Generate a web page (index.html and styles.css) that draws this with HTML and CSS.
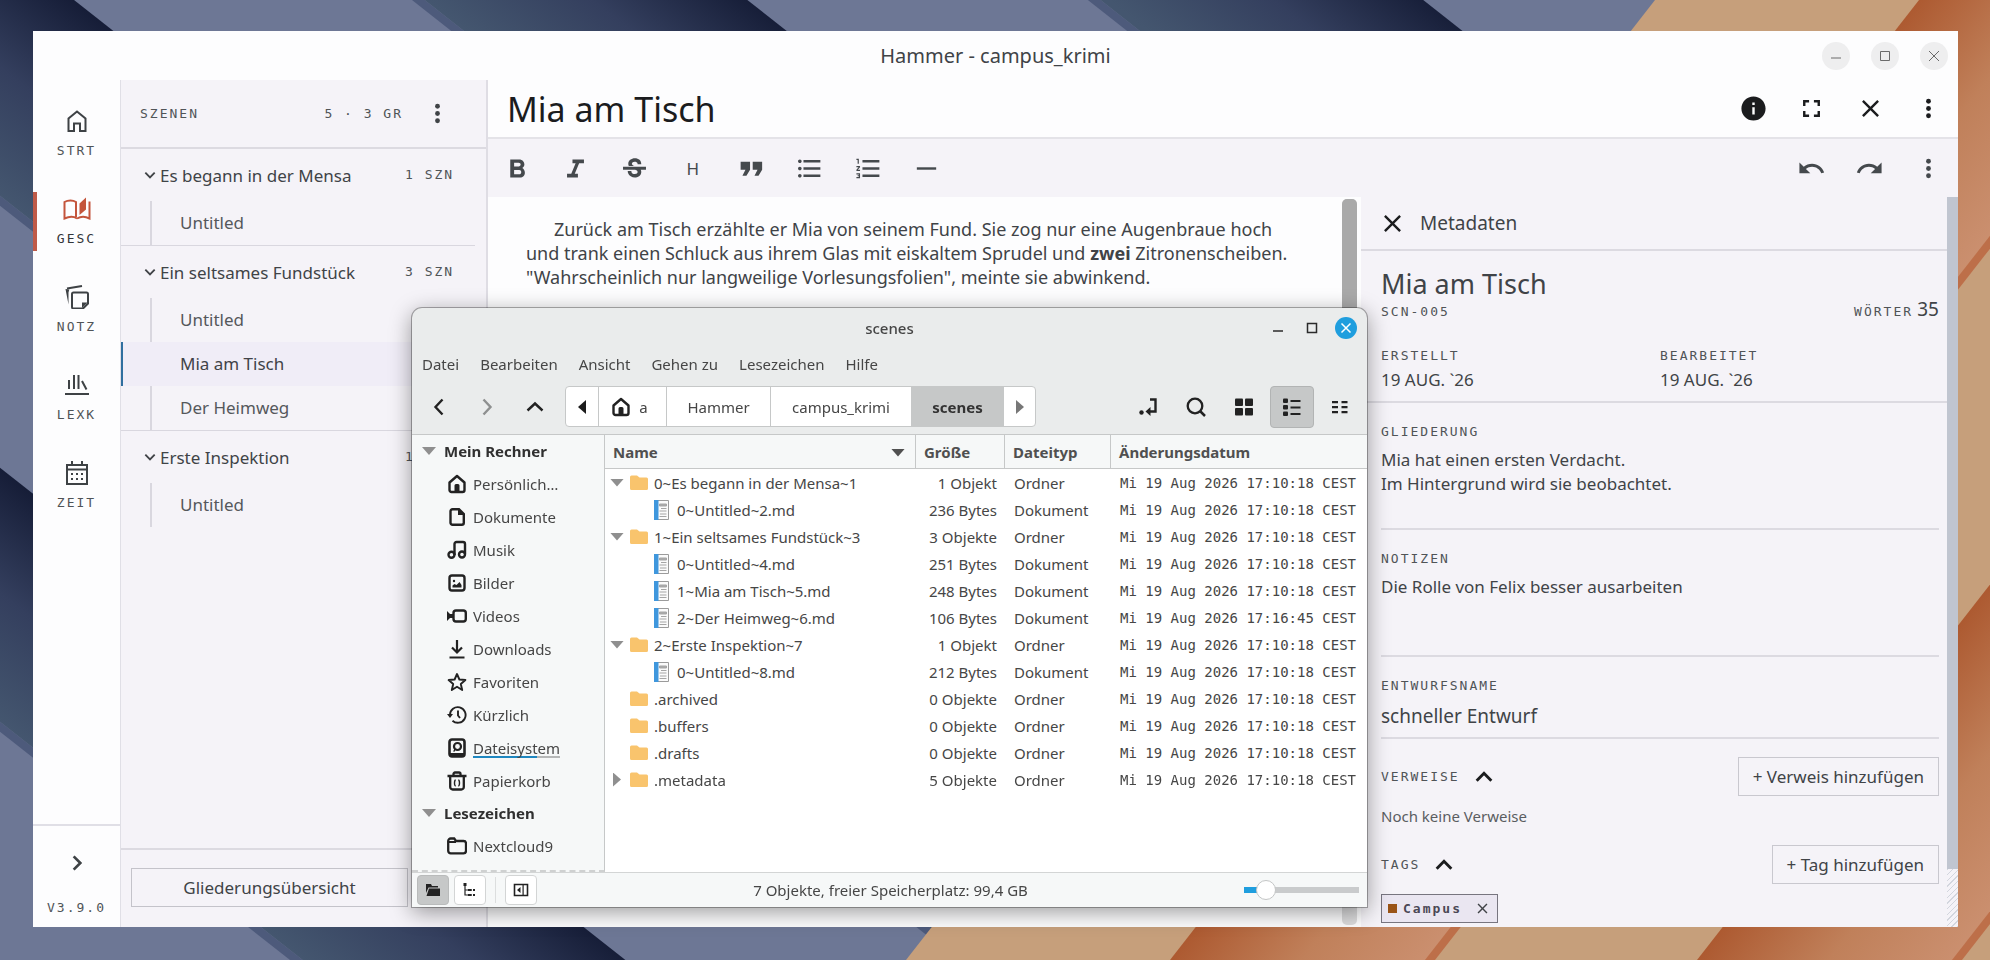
FILE: index.html
```html
<!DOCTYPE html>
<html lang="de">
<head>
    <meta charset="UTF-8">
    <meta name="viewport" content="width=device-width, initial-scale=1.0">
    <title>Hammer - campus_krimi</title>
    <link rel="stylesheet" href="styles.css">
</head>
<body>

<!-- icons -->
<svg class="sprite" aria-hidden="true">
    <symbol id="i-home" viewBox="0 0 24 24"><path d="M3.500 22V9.500L12 2.500l8.500 7V22H15v-7.500H9V22z" fill="none" stroke="currentColor" stroke-width="2"/></symbol>
    <symbol id="i-book" viewBox="0 0 28 24"><path d="M14 21.500C11 19.500 6 19.500 1.500 21.500V5C5 3 10 3 13 5v15M26.500 4.500v17c-4-2-9-2-12.500 0" fill="none" stroke="currentColor" stroke-width="2"/><path d="M16.500 6.500L23 .5v12l-6.500 5.500z" fill="currentColor"/></symbol>
    <symbol id="i-notes" viewBox="0 0 24 24"><path d="M8.500 7.500h13a1.500 1.500 0 0 1 1.500 1.500v9.500l-5 5H8.500A1.500 1.500 0 0 1 7 22V9a1.500 1.500 0 0 1 1.500-1.500zM2 3.500L17 1" fill="none" stroke="currentColor" stroke-width="2"/><path d="M17 23v-5.500h5.500zM.5 4l3 15.500v-12l.8-3z" fill="currentColor"/></symbol>
    <symbol id="i-lexicon" viewBox="0 0 24 24"><path d="M4 7v9M9 2v14M13.500 2v14M17 8l4.500 8.500M0 21h24" fill="none" stroke="currentColor" stroke-width="2"/></symbol>
    <symbol id="i-calendar" viewBox="0 0 24 24"><path d="M2 4h20v19H2zM2 8.500h20" fill="none" stroke="currentColor" stroke-width="2"/><path d="M6 0h2v4H6zM16 0h2v4h-2zM6 12h2v2H6zM11 12h2v2h-2zM16 12h2v2h-2zM6 17h2v2H6zM11 17h2v2h-2zM16 17h2v2h-2z" fill="currentColor"/></symbol>
    <symbol id="i-more" viewBox="0 0 24 24"><circle cx="12" cy="6" r="2"/><circle cx="12" cy="12" r="2"/><circle cx="12" cy="18" r="2"/></symbol>
    <symbol id="i-chevron" viewBox="0 0 12 12"><path d="M2 4l4 4 4-4" fill="none" stroke="currentColor" stroke-width="1.600"/></symbol>
    <symbol id="i-close" viewBox="0 0 24 24"><path d="M19 6.410L17.590 5 12 10.590 6.410 5 5 6.410 10.590 12 5 17.590 6.410 19 12 13.410 17.590 19 19 17.590 13.410 12z"/></symbol>
    <symbol id="i-info" viewBox="0 0 24 24"><path d="M12 2C6.480 2 2 6.480 2 12s4.480 10 10 10 10-4.480 10-10S17.520 2 12 2zm1 15h-2v-6h2v6zm0-8h-2V7h2v2z"/></symbol>
    <symbol id="i-full" viewBox="0 0 24 24"><path d="M7 14H5v5h5v-2H7v-3zm-2-4h2V7h3V5H5v5zm12 7h-3v2h5v-5h-2v3zM14 5v2h3v3h2V5h-5z"/></symbol>
    <symbol id="i-bold" viewBox="0 0 24 24"><path d="M16 11.600c1-.7 1.700-1.800 1.700-2.900 0-2.400-1.800-4.200-4.200-4.200H6v15h8.200c2.200 0 3.900-1.800 3.900-4 0-1.700-.9-3.200-2.100-3.900zM9.200 7.200h3.800c.9 0 1.600.7 1.600 1.500s-.7 1.600-1.600 1.600H9.200zm4.300 9.500H9.200v-3.400h4.300c.9 0 1.600.8 1.600 1.700s-.7 1.700-1.600 1.700z"/></symbol>
    <symbol id="i-italic" viewBox="0 0 24 24"><path d="M9.500 4.500v3.200h2.600L8.500 16.300H5v3.200h9v-3.200h-2.600L15 7.700h4V4.500z"/></symbol>
    <symbol id="i-strike" viewBox="0 1 24 24"><path d="M6.850 9.080C6.850 6.370 9.450 4.500 12.240 4.500c1.640 0 3 .49 3.900 1.280.77.65 1.460 1.730 1.460 3.740h-3.010c0-.31-.05-.59-.15-.85-.29-.86-1.200-1.280-2.250-1.280-1.860 0-2.340 1.020-2.340 1.700 0 .48.25.88.74 1.210.38.25.77.48 1.410.7H7.390c-.21-.34-.54-.89-.54-1.920zM21.500 14v-2.400h-19V14h10.120c1.150.45 1.960.75 1.960 1.970 0 1-.81 1.670-2.280 1.670-1.540 0-2.930-.54-2.930-2.510H6.400c0 .55.08 1.130.24 1.580.81 2.290 3.290 3.800 5.670 3.800 2.270 0 5.300-1.390 5.300-4.550 0-.3-.01-1.160-.48-1.940z"/></symbol>
    <symbol id="i-quote" viewBox="0 0 24 24"><path d="M4.500 18h3.300l3-5V6.500H3V13h4zm10 0h3.300l3-5V6.500H13V13h4z"/></symbol>
    <symbol id="i-list" viewBox="0 0 24 24"><path d="M4 10.500c-.83 0-1.500.67-1.500 1.500s.67 1.500 1.500 1.500 1.500-.67 1.500-1.500-.67-1.500-1.500-1.500zm0-6c-.83 0-1.500.67-1.500 1.500S3.170 7.500 4 7.500 5.500 6.830 5.500 6 4.830 4.500 4 4.500zm0 12c-.83 0-1.500.68-1.500 1.500s.68 1.500 1.500 1.500 1.500-.68 1.500-1.500-.67-1.500-1.500-1.500zM7 19h14v-2H7v2zm0-6h14v-2H7v2zm0-8v2h14V5H7z"/></symbol>
    <symbol id="i-numbers" viewBox="0 0 24 24"><path d="M2 17h2v.5H3v1h1v.5H2v1h3v-4H2v1zm1-9h1V4H2v1h1v3zm-1 3h1.800L2 13.100v.9h3v-1H3.200L5 10.900V10H2v1zm5-6v2h14V5H7zm0 14h14v-2H7v2zm0-6h14v-2H7v2z"/></symbol>
    <symbol id="i-rule" viewBox="0 0 24 24"><path d="M4 11h16v2H4z"/></symbol>
    <symbol id="i-undo" viewBox="0 0 24 24"><path d="M12.500 8c-2.650 0-5.050.99-6.900 2.600L2 7v9h9l-3.620-3.620c1.390-1.160 3.160-1.880 5.120-1.880 3.540 0 6.550 2.310 7.600 5.500l2.370-.78C21.080 11.030 17.150 8 12.500 8z"/></symbol>
    <symbol id="i-redo" viewBox="0 0 24 24"><path d="M18.400 10.600C16.550 8.990 14.150 8 11.500 8c-4.650 0-8.580 3.030-9.960 7.220L3.900 16c1.050-3.190 4.050-5.500 7.600-5.500 1.950 0 3.730.72 5.120 1.880L13 16h9V7l-3.600 3.600z"/></symbol>

    <symbol id="f-home" viewBox="0 0 20 20"><path d="M2.500 8.500L10 2l7.500 6.500V16a2 2 0 0 1-2 2h-11a2 2 0 0 1-2-2z" fill="none" stroke="currentColor" stroke-width="2.400" stroke-linejoin="round"/><path d="M7.500 11.500a1.500 1.500 0 0 1 1.500-1.500h2a1.500 1.500 0 0 1 1.500 1.500V18h-5z"/></symbol>
    <symbol id="f-doc" viewBox="0 0 20 20"><path d="M5.500 2.200h6.500l4.800 4.800v8.800a2 2 0 0 1-2 2h-9.300a2 2 0 0 1-2-2V4.200a2 2 0 0 1 2-2z" fill="none" stroke="currentColor" stroke-width="2.400"/><path d="M11 2v6h6z"/></symbol>
    <symbol id="f-music" viewBox="0 0 20 20"><path d="M7.500 15V4a2 2 0 0 1 2-2H16a2 2 0 0 1 2 2v10" fill="none" stroke="currentColor" stroke-width="2.400"/><circle cx="4.500" cy="14.800" r="3" fill="none" stroke="currentColor" stroke-width="2.400"/><circle cx="15" cy="14.500" r="3" fill="none" stroke="currentColor" stroke-width="2.400"/></symbol>
    <symbol id="f-image" viewBox="0 0 20 20"><rect x="2.500" y="2.500" width="15" height="15" rx="2.500" fill="none" stroke="currentColor" stroke-width="2.400"/><circle cx="7" cy="8" r="1.200"/><path d="M5.500 14.500v-2l2-1.500 2 1 3-3 2 3v2.500z"/></symbol>
    <symbol id="f-video" viewBox="0 0 20 20"><rect x="6.500" y="4.500" width="12.300" height="11" rx="2.500" fill="none" stroke="currentColor" stroke-width="2.400"/><path d="M0 5l5 5-5 5z"/><path d="M2 8h4v4H2z"/></symbol>
    <symbol id="f-download" viewBox="0 0 20 20"><path d="M10 1v12M5 8.500l5 5 5-5M2.500 18.500h15" fill="none" stroke="currentColor" stroke-width="2.200"/></symbol>
    <symbol id="f-star" viewBox="0 0 20 20"><path d="M10 2l2.400 5.500 6 .5-4.600 4 1.400 6L10 14.800 4.800 18l1.400-6L1.600 8l6-.5z" fill="none" stroke="currentColor" stroke-width="1.900" stroke-linejoin="round"/></symbol>
    <symbol id="f-recent" viewBox="0 0 20 20"><path d="M3 10a7.800 7.800 0 1 1 2.500 5.700M11 5.500v5l2 2.500" fill="none" stroke="currentColor" stroke-width="1.900"/><path d="M0 9h6l-3 4z"/></symbol>
    <symbol id="f-disk" viewBox="0 0 20 20"><rect x="2.500" y="1.500" width="15" height="17" rx="2.500" fill="none" stroke="currentColor" stroke-width="2.600"/><circle cx="10.500" cy="8.500" r="3.500" fill="none" stroke="currentColor" stroke-width="2.200"/><path d="M6 13.500l2-3.500v3.500zM3 15h14v3H3z"/></symbol>
    <symbol id="f-trash" viewBox="0 0 20 20"><path d="M.5 5h19M6.500 5V3a1.500 1.500 0 0 1 1.500-1.500h4A1.500 1.500 0 0 1 13.500 3v2M3.200 6v10a2.500 2.500 0 0 0 2.500 2.500h8.600a2.500 2.500 0 0 0 2.500-2.500V6" fill="none" stroke="currentColor" stroke-width="2.300"/><path d="M8.700 9c-1.200.2-1.200.8-1.200 3s0 2.800 1.200 3M11.300 9c1.200.2 1.200.8 1.200 3s0 2.800-1.200 3" fill="none" stroke="currentColor" stroke-width="1.400"/></symbol>
    <symbol id="f-folder" viewBox="0 0 20 20"><path d="M1.200 5a2.500 2.500 0 0 1 2.500-2.500h3.500L9 5h7.500a2.500 2.500 0 0 1 2.500 2.500v7.300a2.500 2.500 0 0 1-2.500 2.500H3.700a2.500 2.500 0 0 1-2.500-2.500z" fill="none" stroke="currentColor" stroke-width="2.300"/><path d="M2 6h7" stroke="currentColor" stroke-width="2"/></symbol>
    <symbol id="f-dir" viewBox="0 0 18 16"><path d="M0 2a1.500 1.500 0 0 1 1.500-1.500H7l2.500 2h7A1.500 1.500 0 0 1 18 4v9.500a1.500 1.500 0 0 1-1.500 1.500h-15A1.500 1.500 0 0 1 0 13.500z" fill="#f9c46d"/></symbol>
    <symbol id="f-file" viewBox="0 0 15 20"><path d="M.5.500h14v19H.5z" fill="#fbfbfb" stroke="#9b9b9b"/><path d="M0 0h4.500v20H0z" fill="#3f97dd"/><path d="M5.500 4h7v2h-7zM7 8.500h5.500M5.500 11h7M6 14h6.500M5.500 16.500h7" fill="#aaa" stroke="#a5a5a5" stroke-width="1"/></symbol>
    <symbol id="f-back" viewBox="0 0 20 20"><path d="M13.500 2.500L6.500 10l7 7.500" fill="none" stroke="currentColor" stroke-width="2.400"/></symbol>
    <symbol id="f-enter" viewBox="0 0 20 20"><path d="M12 2.500h5.500v12H9" fill="none" stroke="currentColor" stroke-width="2.400"/><path d="M7.500 14.500l5-4.500v9z"/><circle cx="3.500" cy="15.500" r="2.200"/></symbol>
    <symbol id="f-search" viewBox="0 0 20 20"><circle cx="9" cy="9" r="7.300" fill="none" stroke="currentColor" stroke-width="2.300"/><path d="M14 14l5 5" stroke="currentColor" stroke-width="2.500"/></symbol>
    <symbol id="f-grid" viewBox="0 0 20 20"><rect x="1" y="1.500" width="8" height="7.500" rx="1"/><rect x="11" y="1.500" width="8" height="7.500" rx="1"/><rect x="1" y="11" width="8" height="7.500" rx="1"/><rect x="11" y="11" width="8" height="7.500" rx="1"/></symbol>
    <symbol id="f-rows" viewBox="0 0 20 20"><rect x="1" y="1.500" width="5" height="4.500" rx="1"/><rect x="1" y="8" width="5" height="4.500" rx="1"/><rect x="1" y="14.500" width="5" height="4.500" rx="1"/><path d="M8.500 3h10v2h-10zM8.500 9.500h10v2h-10zM8.500 16h10v2h-10z"/></symbol>
    <symbol id="f-compact" viewBox="0 0 20 20"><path d="M2 4h6v2.200H2zM2 9h6v2.200H2zM2 14h6v2.200H2zM11.500 4h6v2.200h-6zM11.500 9h6v2.200h-6zM11.500 14h6v2.200h-6z"/></symbol>
</svg>

<svg class="wallpaper" viewBox="0 0 1990 960" preserveAspectRatio="none" aria-hidden="true">
    <defs>
        <linearGradient id="night" gradientUnits="userSpaceOnUse" x1="0" y1="722" x2="125" y2="562">
            <stop offset="0" stop-color="#44566f"/><stop offset=".5" stop-color="#343f5e"/><stop offset="1" stop-color="#151c36"/>
        </linearGradient>
        <linearGradient id="copper" gradientUnits="userSpaceOnUse" x1="1545" y1="480" x2="1708" y2="607">
            <stop offset="0" stop-color="#ad5a31"/><stop offset=".5" stop-color="#c0805a"/><stop offset="1" stop-color="#cb9070"/>
        </linearGradient>
        <g id="band">
            <path d="M-800 102L2000 2306V2296L-800 92z" fill="#4d5a7b"/>
            <path d="M-800 -162L2000 2042V2296L-800 92z" fill="url(#night)"/>
        </g>
        <g id="ribbon">
            <path d="M1919 0h262L1432 960h-262z" fill="url(#copper)"/>
            <path d="M2174 0h10L1435 960h-10z" fill="#bd6f49"/>
        </g>
    </defs>
    <rect width="1990" height="960" fill="#6d7795"/>
    <use href="#band"/>
    <use href="#band" transform="translate(0 -526)"/>
    <use href="#band" transform="translate(0 -1056)"/>
    <use href="#band" transform="translate(0 -1588)"/>
    <path d="M1655 0H1990V960H906z" fill="#c69f7b"/>
    <use href="#ribbon"/>
    <use href="#ribbon" transform="translate(527 0)"/>
</svg>

<div class="app">
    <header class="app-title">
        <h1>Hammer - campus_krimi</h1>
        <div class="app-buttons">
            <button aria-label="Minimieren"><svg viewBox="0 0 12 12"><path d="M1 8h10"/></svg></button>
            <button aria-label="Maximieren"><svg viewBox="0 0 12 12"><path d="M1.500 1.500h9v9h-9z"/></svg></button>
            <button aria-label="Schließen"><svg viewBox="0 0 12 12"><path d="M1 1l10 10M11 1L1 11"/></svg></button>
        </div>
    </header>

    <div class="app-body">
        <nav class="rail">
            <a href="#"><svg><use href="#i-home"/></svg><span>STRT</span></a>
            <a href="#" class="active"><svg><use href="#i-book"/></svg><span>GESC</span></a>
            <a href="#"><svg><use href="#i-notes"/></svg><span>NOTZ</span></a>
            <a href="#"><svg><use href="#i-lexicon"/></svg><span>LEXK</span></a>
            <a href="#"><svg><use href="#i-calendar"/></svg><span>ZEIT</span></a>
            <div class="rail-foot">
                <button aria-label="Ausklappen"><svg><use href="#i-chevron"/></svg></button>
                <span>V3.9.0</span>
            </div>
        </nav>

        <aside class="scenes">
            <div class="scenes-head">
                <span>SZENEN</span>
                <span class="count">5 · 3 GR</span>
                <button aria-label="Mehr"><svg class="icon"><use href="#i-more"/></svg></button>
            </div>
            <section class="group">
                <div class="group-head"><svg><use href="#i-chevron"/></svg><span>Es begann in der Mensa</span><small>1 SZN</small></div>
                <ul><li><a href="#">Untitled</a></li></ul>
            </section>
            <section class="group">
                <div class="group-head"><svg><use href="#i-chevron"/></svg><span>Ein seltsames Fundstück</span><small>3 SZN</small></div>
                <ul>
                    <li><a href="#">Untitled</a></li>
                    <li class="selected"><a href="#">Mia am Tisch</a></li>
                    <li><a href="#">Der Heimweg</a></li>
                </ul>
            </section>
            <section class="group">
                <div class="group-head"><svg><use href="#i-chevron"/></svg><span>Erste Inspektion</span><small>1</small></div>
                <ul><li><a href="#">Untitled</a></li></ul>
            </section>
            <div class="scenes-foot"><button>Gliederungsübersicht</button></div>
        </aside>

        <main class="editor">
            <div class="editor-head">
                <h2>Mia am Tisch</h2>
                <div class="actions">
                    <button aria-label="Info"><svg class="icon"><use href="#i-info"/></svg></button>
                    <button aria-label="Vollbild"><svg class="icon"><use href="#i-full"/></svg></button>
                    <button aria-label="Schließen"><svg class="icon"><use href="#i-close"/></svg></button>
                    <button aria-label="Mehr"><svg class="icon"><use href="#i-more"/></svg></button>
                </div>
            </div>
            <div class="toolbar">
                <div class="format">
                    <button aria-label="Fett"><svg class="icon"><use href="#i-bold"/></svg></button>
                    <button aria-label="Kursiv"><svg class="icon"><use href="#i-italic"/></svg></button>
                    <button aria-label="Durchgestrichen"><svg class="icon"><use href="#i-strike"/></svg></button>
                    <button>H</button>
                    <button aria-label="Zitat"><svg class="icon"><use href="#i-quote"/></svg></button>
                    <button aria-label="Liste"><svg class="icon"><use href="#i-list"/></svg></button>
                    <button aria-label="Nummerierung"><svg class="icon"><use href="#i-numbers"/></svg></button>
                    <button aria-label="Trennlinie"><svg class="icon"><use href="#i-rule"/></svg></button>
                </div>
                <div class="actions three">
                    <button aria-label="Rückgängig"><svg class="icon"><use href="#i-undo"/></svg></button>
                    <button aria-label="Wiederholen"><svg class="icon"><use href="#i-redo"/></svg></button>
                    <button aria-label="Mehr"><svg class="icon"><use href="#i-more"/></svg></button>
                </div>
            </div>
            <div class="editor-body">
                <div class="page">
                    <p>Zurück am Tisch erzählte er Mia von seinem Fund. Sie zog nur eine Augenbraue hoch<br>
                    und trank einen Schluck aus ihrem Glas mit eiskaltem Sprudel und <b>zwei</b> Zitronenscheiben.<br>
                    "Wahrscheinlich nur langweilige Vorlesungsfolien", meinte sie abwinkend.</p>
                </div>
                <div class="page-scroll"><div></div></div>
                <aside class="meta">
                    <div class="meta-main">
                        <div class="meta-head">
                            <button aria-label="Schließen"><svg class="icon"><use href="#i-close"/></svg></button>
                            <span>Metadaten</span>
                        </div>
                        <div class="meta-top">
                            <div class="meta-name">
                                <h3>Mia am Tisch</h3>
                                <div class="words"><span class="label">SCN-005</span><span class="total"><span class="label">WÖRTER</span> <b>35</b></span></div>
                            </div>
                            <div class="dates">
                                <div><span class="label">ERSTELLT</span><p>19 AUG. `26</p></div>
                                <div><span class="label">BEARBEITET</span><p>19 AUG. `26</p></div>
                            </div>
                        </div>
                        <div class="field">
                            <label class="label" for="outline">GLIEDERUNG</label>
                            <textarea id="outline">Mia hat einen ersten Verdacht.
Im Hintergrund wird sie beobachtet.</textarea>
                        </div>
                        <div class="field">
                            <label class="label" for="notes">NOTIZEN</label>
                            <textarea id="notes">Die Rolle von Felix besser ausarbeiten</textarea>
                        </div>
                        <div class="field last">
                            <label class="label" for="draft">ENTWURFSNAME</label>
                            <input id="draft" type="text" value="schneller Entwurf">
                        </div>
                        <div class="meta-row">
                            <span class="label">VERWEISE</span><svg class="up"><use href="#i-chevron"/></svg>
                            <button>+ Verweis hinzufügen</button>
                        </div>
                        <p class="empty">Noch keine Verweise</p>
                        <div class="meta-row">
                            <span class="label">TAGS</span><svg class="up"><use href="#i-chevron"/></svg>
                            <button>+ Tag hinzufügen</button>
                        </div>
                        <div class="tag"><i></i><span>Campus</span><button aria-label="Entfernen"><svg><use href="#i-close"/></svg></button></div>
                    </div>
                    <div class="meta-scroll"><div></div></div>
                </aside>
            </div>
        </main>
    </div>
</div>

<!-- file manager window -->
<div class="files">
    <header class="files-title">
        <span>scenes</span>
        <div class="files-buttons">
            <button aria-label="Minimieren"><svg viewBox="0 0 12 12"><path d="M1 9h10"/></svg></button>
            <button aria-label="Maximieren"><svg viewBox="0 0 12 12"><path d="M1.500 1.500h9v9h-9z"/></svg></button>
            <button class="x" aria-label="Schließen"><svg viewBox="0 0 12 12"><path d="M1.500 1.500l9 9M10.500 1.500l-9 9"/></svg></button>
        </div>
    </header>
    <nav class="menu">
        <a href="#">Datei</a><a href="#">Bearbeiten</a><a href="#">Ansicht</a><a href="#">Gehen zu</a><a href="#">Lesezeichen</a><a href="#">Hilfe</a>
    </nav>
    <div class="files-bar">
        <div class="history">
            <button aria-label="Zurück"><svg><use href="#f-back"/></svg></button>
            <button class="fwd" aria-label="Vor" disabled><svg><use href="#f-back"/></svg></button>
            <button class="parent" aria-label="Hoch"><svg><use href="#f-back"/></svg></button>
        </div>
        <div class="path">
            <button class="arrow" aria-label="Links"><svg viewBox="0 0 8 14"><path d="M8 0v14L0 7z"/></svg></button>
            <button class="home"><svg><use href="#f-home"/></svg>a</button>
            <button class="p1">Hammer</button>
            <button class="p2">campus_krimi</button>
            <button class="p3 current">scenes</button>
            <button class="arrow right" aria-label="Rechts"><svg viewBox="0 0 8 14"><path d="M0 0v14l8-7z"/></svg></button>
        </div>
        <div class="views">
            <button aria-label="Pfad eingeben"><svg><use href="#f-enter"/></svg></button>
            <button aria-label="Suchen"><svg><use href="#f-search"/></svg></button>
            <button aria-label="Symbole"><svg><use href="#f-grid"/></svg></button>
            <button class="on" aria-label="Liste"><svg><use href="#f-rows"/></svg></button>
            <button aria-label="Kompakt"><svg><use href="#f-compact"/></svg></button>
        </div>
    </div>
    <div class="files-body">
        <aside class="places">
            <h4><i class="tri"></i>Mein Rechner</h4>
            <a href="#"><svg><use href="#f-home"/></svg>Persönlich…</a>
            <a href="#"><svg><use href="#f-doc"/></svg>Dokumente</a>
            <a href="#"><svg><use href="#f-music"/></svg>Musik</a>
            <a href="#"><svg><use href="#f-image"/></svg>Bilder</a>
            <a href="#"><svg><use href="#f-video"/></svg>Videos</a>
            <a href="#"><svg><use href="#f-download"/></svg>Downloads</a>
            <a href="#"><svg><use href="#f-star"/></svg>Favoriten</a>
            <a href="#"><svg><use href="#f-recent"/></svg>Kürzlich</a>
            <a href="#"><svg><use href="#f-disk"/></svg><span class="usage">Dateisystem</span></a>
            <a href="#"><svg><use href="#f-trash"/></svg>Papierkorb</a>
            <h4><i class="tri"></i>Lesezeichen</h4>
            <a href="#"><svg><use href="#f-folder"/></svg>Nextcloud9</a>
            <a href="#" aria-label="Ordner"><svg><use href="#f-folder"/></svg></a>
        </aside>
        <div class="listing">
            <table>
                <thead>
                    <tr><th class="c-name">Name<i class="tri"></i></th><th class="c-size">Größe</th><th class="c-type">Dateityp</th><th>Änderungsdatum</th></tr>
                </thead>
                <tbody>
                    <tr><td><div class="name"><i class="tri"></i><svg><use href="#f-dir"/></svg>0~Es begann in der Mensa~1</div></td><td>1 Objekt</td><td>Ordner</td><td>Mi 19 Aug 2026 17:10:18 CEST</td></tr>
                    <tr><td><div class="name file"><svg><use href="#f-file"/></svg>0~Untitled~2.md</div></td><td>236 Bytes</td><td>Dokument</td><td>Mi 19 Aug 2026 17:10:18 CEST</td></tr>
                    <tr><td><div class="name"><i class="tri"></i><svg><use href="#f-dir"/></svg>1~Ein seltsames Fundstück~3</div></td><td>3 Objekte</td><td>Ordner</td><td>Mi 19 Aug 2026 17:10:18 CEST</td></tr>
                    <tr><td><div class="name file"><svg><use href="#f-file"/></svg>0~Untitled~4.md</div></td><td>251 Bytes</td><td>Dokument</td><td>Mi 19 Aug 2026 17:10:18 CEST</td></tr>
                    <tr><td><div class="name file"><svg><use href="#f-file"/></svg>1~Mia am Tisch~5.md</div></td><td>248 Bytes</td><td>Dokument</td><td>Mi 19 Aug 2026 17:10:18 CEST</td></tr>
                    <tr><td><div class="name file"><svg><use href="#f-file"/></svg>2~Der Heimweg~6.md</div></td><td>106 Bytes</td><td>Dokument</td><td>Mi 19 Aug 2026 17:16:45 CEST</td></tr>
                    <tr><td><div class="name"><i class="tri"></i><svg><use href="#f-dir"/></svg>2~Erste Inspektion~7</div></td><td>1 Objekt</td><td>Ordner</td><td>Mi 19 Aug 2026 17:10:18 CEST</td></tr>
                    <tr><td><div class="name file"><svg><use href="#f-file"/></svg>0~Untitled~8.md</div></td><td>212 Bytes</td><td>Dokument</td><td>Mi 19 Aug 2026 17:10:18 CEST</td></tr>
                    <tr><td><div class="name"><i class="tri none"></i><svg><use href="#f-dir"/></svg>.archived</div></td><td>0 Objekte</td><td>Ordner</td><td>Mi 19 Aug 2026 17:10:18 CEST</td></tr>
                    <tr><td><div class="name"><i class="tri none"></i><svg><use href="#f-dir"/></svg>.buffers</div></td><td>0 Objekte</td><td>Ordner</td><td>Mi 19 Aug 2026 17:10:18 CEST</td></tr>
                    <tr><td><div class="name"><i class="tri none"></i><svg><use href="#f-dir"/></svg>.drafts</div></td><td>0 Objekte</td><td>Ordner</td><td>Mi 19 Aug 2026 17:10:18 CEST</td></tr>
                    <tr><td><div class="name"><i class="tri closed"></i><svg><use href="#f-dir"/></svg>.metadata</div></td><td>5 Objekte</td><td>Ordner</td><td>Mi 19 Aug 2026 17:10:18 CEST</td></tr>
                </tbody>
            </table>
        </div>
    </div>
    <footer class="status">
        <button class="on" aria-label="Orte"><svg viewBox="0 0 16 14"><path d="M1 1h5l1 2h6v1.500H3.500L1 10zM4 5.500h11V13H1.500z"/></svg></button>
        <button aria-label="Baum"><svg viewBox="0 0 16 14"><path d="M3 2v10h3M3 7h3M8 7h2M8 12h2" fill="none" stroke="currentColor" stroke-width="1.200"/><path d="M1.500 0h3v3h-3zM6 6h3.500v2H6zM6 11h3.500v2H6zM11 6h2v2h-2zM11 11h2v2h-2z"/></svg></button>
        <span class="sep"></span>
        <button aria-label="Seitenleiste"><svg viewBox="0 0 16 14"><path d="M1.500 1.500h13v11h-13z" fill="none" stroke="currentColor" stroke-width="1.600"/><path d="M7.500 4v6L4 7zM9.500 2h1.200v10H9.500z"/></svg></button>
        <span class="status-text">7 Objekte, freier Speicherplatz: 99,4 GB</span>
        <input type="range" min="0" max="100" value="13" aria-label="Zoom">
    </footer>
</div>

</body>
</html>
```
FILE: styles.css
```css
* {
    box-sizing: border-box;
}

body {
    margin: 0;
    height: 100vh;
    overflow: hidden;
    padding: 31px 32px 33px 33px;
    font-family: "Noto Sans", sans-serif;
    color: #404347;
}

h1, h2, h3, h4, p, ul {
    margin: 0;
    padding: 0;
    font-weight: normal;
    list-style: none;
}

a {
    color: inherit;
    text-decoration: none;
}

button {
    border: 0;
    padding: 0;
    background: none;
    color: inherit;
    font: inherit;
    cursor: pointer;
    display: flex;
    align-items: center;
    justify-content: center;
}

svg {
    fill: currentColor;
    flex: none;
}

.sprite {
    position: absolute;
    width: 0;
    height: 0;
}

.wallpaper {
    position: fixed;
    top: 0;
    left: 0;
    width: 100%;
    height: 100%;
    z-index: -1;
}

.icon {
    width: 29px;
    height: 29px;
}

/* main window */
.app {
    height: 100%;
    display: flex;
    flex-direction: column;
    background: #fdfdfe;
}

.app-title {
    height: 49px;
    display: grid;
    grid-template-columns: 1fr auto 1fr;
    align-items: center;
    flex: none;
}

.app-title h1 {
    grid-column: 2;
    font-size: 20px;
}

.app-buttons {
    display: flex;
    gap: 21px;
    justify-content: flex-end;
    padding-right: 10px;
}

.app-buttons button {
    width: 28px;
    height: 28px;
    border-radius: 50%;
    background: #eeeeef;
}

.app-buttons svg {
    width: 12px;
    height: 12px;
    fill: none;
    stroke: #6b6b6b;
}

.app-body {
    flex: 1;
    min-height: 0;
    display: flex;
}

.rail {
    width: 88px;
    border-right: 1px solid #e0dfe6;
    padding-top: 24px;
    display: flex;
    flex-direction: column;
    gap: 29px;
    flex: none;
    color: #3e4245;
}

.rail a {
    height: 59px;
    display: flex;
    flex-direction: column;
    align-items: center;
    justify-content: space-between;
    border-left: 4px solid transparent;
    padding: 5px 4px 3px 0;
}

.rail svg {
    width: 28px;
    height: 24px;
}

.rail .active {
    border-left-color: #bf5a48;
}

.rail .active svg {
    color: #c4553c;
}

.rail span, .label, .scenes-head span, .group-head small {
    font-family: "DejaVu Sans Mono", monospace;
    font-size: 13px;
    line-height: 18px;
    letter-spacing: 2px;
    color: #505457;
}

.rail .active span {
    color: #33363a;
}

.rail-foot {
    margin-top: auto;
    height: 103px;
    border-top: 2px solid #e0dfe6;
    display: flex;
    flex-direction: column;
    align-items: center;
    justify-content: space-between;
    padding: 27px 0 10px;
}

.rail-foot svg {
    width: 20px;
    height: 20px;
    transform: rotate(-90deg);
}

/* scene list */
.scenes {
    width: 367px;
    flex: none;
    background: #f5f3f8;
    border-right: 2px solid #dfdde4;
    display: flex;
    flex-direction: column;
}

.scenes-head {
    height: 69px;
    display: flex;
    align-items: center;
    padding: 0 34px 0 19px;
    border-bottom: 2px solid #dcdae1;
}

.scenes-head .count {
    margin-left: auto;
    margin-right: 20px;
}

.group {
    margin-right: 11px;
    border-bottom: 1px solid #d9d7df;
}

.group:nth-of-type(3) {
    border-bottom: 0;
}

.group-head {
    height: 52px;
    display: flex;
    align-items: center;
    padding: 0 21px 0 22px;
    font-size: 17px;
}

.group-head svg {
    width: 14px;
    height: 14px;
    margin-right: 3px;
}

.group-head small {
    margin-left: auto;
    width: 49px;
    white-space: nowrap;
}

.group ul {
    background: linear-gradient(#d9d7df, #d9d7df) 29px 0 / 2px 100% no-repeat;
}

.group li a {
    display: block;
    height: 44px;
    line-height: 44px;
    padding-left: 57px;
    font-size: 17px;
    color: #55585c;
    border-left: 2px solid transparent;
}

.group .selected a {
    background: #f0edf7;
    border-left-color: #2f6f9f;
    background-clip: padding-box;
    color: #404347;
}

.scenes-foot {
    margin-top: auto;
    height: 79px;
    border-top: 2px solid #dcdae1;
    padding: 18px 78px 19px 10px;
}

.scenes-foot button {
    width: 100%;
    height: 39px;
    border: 1px solid #c4c3ca;
    font-size: 17px;
}

/* editor */
.editor {
    flex: 1;
    min-width: 0;
    display: flex;
    flex-direction: column;
}

.editor-head {
    height: 59px;
    display: flex;
    align-items: center;
    justify-content: space-between;
    padding-left: 19px;
    border-bottom: 2px solid #e4e3e8;
    color: #1b1c1e;
    flex: none;
}

.editor-head h2 {
    font-size: 34px;
}

.actions {
    width: 234px;
    display: grid;
    grid-template-columns: repeat(4, 1fr);
}

.actions.three {
    width: 176px;
    grid-template-columns: repeat(3, 1fr);
}

.toolbar {
    height: 58px;
    display: flex;
    align-items: center;
    justify-content: space-between;
    background: #f5f3f8;
    color: #45494d;
    flex: none;
}

.format {
    width: 468px;
    display: grid;
    grid-template-columns: repeat(8, 1fr);
    font-size: 17px;
}

.editor-body {
    flex: 1;
    min-height: 0;
    display: flex;
}

.page {
    flex: 1;
    padding: 20px 0 0 38px;
    font-size: 18px;
    line-height: 24px;
    white-space: nowrap;
}

.page p {
    text-indent: 28px;
}

.page-scroll {
    width: 15px;
    margin: 2px 4px 2px 0;
    border-radius: 5px;
    background: #dcdcdd;
}

.page-scroll div {
    height: 80%;
    border-radius: 5px;
    background: #a9a9a9;
}

/* metadata panel */
.meta {
    width: 597px;
    flex: none;
    display: flex;
    background: #f5f3f8;
    overflow: hidden;
}

.meta-main {
    flex: 1;
    min-width: 0;
}

.meta-head {
    height: 54px;
    display: flex;
    align-items: center;
    gap: 13px;
    padding-left: 17px;
    font-size: 19px;
    border-bottom: 2px solid #dcdae1;
}

.meta-head svg {
    color: #1b1c1e;
}

.meta-top {
    padding: 14px 8px 9px 20px;
    border-bottom: 2px solid #dcdae1;
    height: 152px;
}

.meta h3 {
    font-size: 27px;
    line-height: 38px;
}

.words {
    display: flex;
    justify-content: space-between;
    align-items: flex-start;
    height: 18px;
}

.words .total {
    line-height: 12px;
}

.words .total .label {
    line-height: 12px;
}

.words b {
    font-size: 19px;
    font-weight: normal;
}

.dates {
    display: grid;
    grid-template-columns: 1fr 1fr;
    margin-top: 26px;
    font-size: 17px;
    line-height: 24px;
}

.label {
    display: inline-block;
}

.dates .label {
    display: block;
    margin-bottom: 3px;
}

.field {
    margin: 0 8px 0 20px;
    height: 127px;
    padding-top: 20px;
    border-bottom: 2px solid #dcdae1;
}

.field .label {
    display: block;
    margin-bottom: 7px;
}

.field textarea, .field input {
    display: block;
    width: 100%;
    border: 0;
    padding: 0;
    background: none;
    font: 17px/24px "Noto Sans", sans-serif;
    color: inherit;
    resize: none;
    outline: 0;
}

.field textarea {
    height: 60px;
}

.field.last {
    height: 82px;
}

.field.last input {
    font-size: 19px;
    height: 28px;
}

.meta-row {
    display: flex;
    align-items: center;
    margin: 18px 8px 0 20px;
}

.meta-row .up {
    width: 22px;
    height: 22px;
    margin-left: 13px;
    color: #1b1c1e;
    transform: rotate(180deg);
}

.meta-row button {
    margin-left: auto;
    height: 39px;
    padding: 0 14px;
    border: 1px solid #c9c8cf;
    font-size: 17px;
}

.empty {
    margin: 9px 0 0 20px;
    font-size: 15px;
    line-height: 22px;
    color: #5a5d61;
}

.tag {
    display: flex;
    align-items: center;
    width: 117px;
    height: 29px;
    margin: 10px 0 0 20px;
    padding: 0 6px;
    border: 1px solid #77757f;
    background: #eae6f1;
}

.tag i {
    width: 9px;
    height: 9px;
    background: #9a5417;
    margin-right: 6px;
}

.tag span {
    font: bold 13px "DejaVu Sans Mono", monospace;
    letter-spacing: 2px;
    color: #4b4855;
}

.tag button {
    margin-left: auto;
}

.tag svg {
    width: 17px;
    height: 17px;
}

.meta-scroll {
    width: 11px;
    background: repeating-linear-gradient(135deg, #f5f3f8 0 3px, #d3d6de 3px 4px);
}

.meta-scroll div {
    height: 92%;
    background: #c0c5d0;
}

/* file manager */
.files {
    position: absolute;
    left: 412px;
    top: 308px;
    width: 955px;
    height: 599px;
    display: flex;
    flex-direction: column;
    background: #eaecec;
    border-radius: 10px 10px 0 0;
    box-shadow: 0 0 0 1px rgba(0, 0, 0, 0.3), 0 5px 22px rgba(0, 0, 0, 0.4);
    font-size: 15px;
    color: #464646;
}

.files-title {
    height: 39px;
    display: grid;
    grid-template-columns: 1fr auto 1fr;
    align-items: center;
}

.files-title > span {
    grid-column: 2;
    font-weight: 500;
}

.files-buttons {
    display: flex;
    justify-content: flex-end;
    gap: 12px;
    padding-right: 10px;
}

.files-buttons button {
    width: 22px;
    height: 22px;
    border-radius: 50%;
}

.files-buttons svg {
    width: 12px;
    height: 12px;
    fill: none;
    stroke: #2b2b2b;
    stroke-width: 1.5;
}

.files-buttons .x {
    background: #1f9ede;
}

.files-buttons .x svg {
    stroke: #fff;
}

.menu {
    height: 34px;
    display: flex;
    align-items: center;
    gap: 21px;
    padding-left: 10px;
}

.files-bar {
    height: 54px;
    display: flex;
    align-items: center;
    border-bottom: 1px solid #c6c8c8;
    padding: 0 5px 2px;
    color: #222;
    flex: none;
}

.files-bar svg {
    width: 20px;
    height: 20px;
}

.history, .views {
    display: flex;
}

.history button, .views button {
    width: 44px;
    height: 42px;
    margin-right: 4px;
    border-radius: 4px;
}

.fwd svg {
    transform: rotate(180deg);
    color: #8e9090;
}

.parent svg {
    transform: rotate(90deg);
}

.path {
    display: flex;
    width: 471px;
    height: 41px;
    margin-left: 4px;
    background: #fff;
    border: 1px solid #c6c8c8;
    border-radius: 4px;
    color: #464646;
}

.path button {
    border-right: 1px solid #c6c8c8;
}

.path .arrow {
    width: 33px;
    color: #1c1c1c;
}

.path .arrow svg {
    width: 8px;
    height: 14px;
}

.path .right {
    width: 31px;
    border-right: 0;
    color: #777;
}

.path .home {
    width: 68px;
    gap: 8px;
    padding-right: 6px;
}

.path .home svg {
    color: #222;
}

.path .p1 {
    width: 104px;
}

.path .p2 {
    flex: 1;
}

.path .p3 {
    width: 92px;
}

.path .current {
    background: #c6c8c8;
    font-weight: bold;
    color: #333;
}

.views {
    margin-left: auto;
}

.views button:last-child {
    margin-right: 0;
}

.views .on {
    background: #c6c8c8;
    border: 1px solid #b2b4b4;
}

.files-body {
    flex: 1;
    min-height: 0;
    display: flex;
}

.places {
    width: 193px;
    flex: none;
    overflow: hidden;
    background: #f6f8f8;
    border-right: 1px solid #c6c8c8;
    border-bottom: 2px dashed #cfd1d1;
}

.places h4, .places a {
    height: 33px;
    display: flex;
    align-items: center;
}

.places h4 {
    height: 32px;
    padding-left: 10px;
    gap: 8px;
    font-weight: bold;
    color: #303030;
}

.places a {
    padding-left: 35px;
    gap: 6px;
}

.places svg {
    width: 20px;
    height: 20px;
    color: #222;
}

/* disk usage bar under the label */
.usage {
    background: linear-gradient(90deg, #1e87c0 74%, #b5b7b7 74%) 0 100% / 100% 2px no-repeat;
}

.tri {
    flex: none;
    display: inline-block;
    width: 14px;
    height: 8px;
    background: #8f8f8f;
    clip-path: polygon(0 0, 100% 0, 50% 100%);
}

.tri.closed {
    width: 8px;
    height: 14px;
    margin: 0 3px;
    clip-path: polygon(0 0, 100% 50%, 0 100%);
}

.tri.none {
    visibility: hidden;
}

.listing {
    flex: 1;
    background: #fff;
}

table {
    width: 100%;
    border-collapse: separate;
    border-spacing: 0;
    table-layout: fixed;
}

th {
    height: 34px;
    padding: 0 8px;
    text-align: left;
    background: #f6f8f8;
    border-bottom: 1px solid #c6c8c8;
    border-right: 1px solid #c6c8c8;
    color: #505050;
}

th:last-child {
    border-right: 0;
}

th .tri {
    float: right;
    margin: 7px 2px 0 0;
    background: #505050;
}

.c-name {
    width: 311px;
}

.c-size {
    width: 89px;
}

.c-type {
    width: 106px;
}

td {
    height: 27px;
    padding: 0 9px;
    white-space: nowrap;
}

td:first-child {
    padding: 0 0 0 5px;
}

td:nth-child(2) {
    padding: 0 8px 0 0;
    text-align: right;
}

td:nth-child(4) {
    font-family: "DejaVu Sans Mono", monospace;
    font-size: 14px;
    padding-right: 0;
}

.name {
    display: flex;
    align-items: center;
    gap: 6px;
}

.name svg {
    width: 18px;
    height: 16px;
}

.name.file {
    padding-left: 44px;
    gap: 8px;
}

.name.file svg {
    width: 15px;
    height: 20px;
}

.status {
    height: 35px;
    flex: none;
    display: flex;
    align-items: center;
    gap: 5px;
    padding: 0 8px 0 5px;
    background: #f6f8f8;
    border-top: 1px solid #d3d5d5;
}

.status button {
    width: 32px;
    height: 30px;
    background: #fff;
    border: 1px solid #d3d5d5;
    border-radius: 4px;
    color: #222;
}

.status .on {
    background: #c6c8c8;
    border-color: #b9bbbb;
}

.status svg {
    width: 16px;
    height: 14px;
}

.sep {
    width: 1px;
    height: 26px;
    margin: 0 4px;
    background: #dcdede;
}

.status-text {
    flex: 1;
    text-align: center;
}

.status input {
    appearance: none;
    width: 115px;
    height: 20px;
    margin: 0;
    background: linear-gradient(90deg, #1f9ede 18px, #c9cbcc 18px) 0 50% / 100% 6px no-repeat;
}

.status input::-webkit-slider-thumb {
    appearance: none;
    width: 20px;
    height: 20px;
    border-radius: 50%;
    background: #fff;
    border: 1px solid #c4c6c6;
}
```
